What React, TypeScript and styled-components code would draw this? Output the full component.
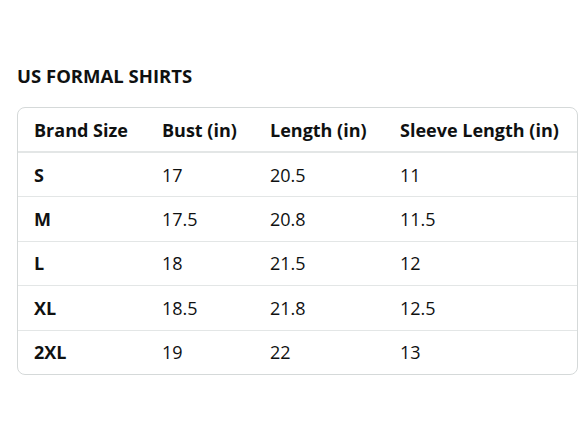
import styled, { createGlobalStyle } from "styled-components";

const GlobalStyle = createGlobalStyle`
  body {
    margin: 0;
    background: #ffffff;
    font-family: "Open Sans", "Noto Sans", Arial, sans-serif;
    color: #0f1111;
  }
`;

const rows = [
  ["S", "17", "20.5", "11"],
  ["M", "17.5", "20.8", "11.5"],
  ["L", "18", "21.5", "12"],
  ["XL", "18.5", "21.8", "12.5"],
  ["2XL", "19", "22", "13"],
];

const heads = ["Brand Size", "Bust (in)", "Length (in)", "Sleeve Length (in)"];
const widths = [128, 108, 130, 195];

function App() {
  return (
    <Page>
      <GlobalStyle />
      <Title>US FORMAL SHIRTS</Title>
      <TableBox>
        <Table>
          <colgroup>
            {widths.map((w, i) => (
              <col key={i} style={{ width: w }} />
            ))}
          </colgroup>
          <thead>
            <tr>
              {heads.map((h) => (
                <HeadCell key={h}>{h}</HeadCell>
              ))}
            </tr>
          </thead>
          <tbody>
            {rows.map((r, i) => (
              <Row key={r[0]} last={i === rows.length - 1}>
                {r.map((v, j) => (
                  <Cell key={j} bold={j === 0}>
                    {v}
                  </Cell>
                ))}
              </Row>
            ))}
          </tbody>
        </Table>
      </TableBox>
    </Page>
  );
}

const Page = styled.div`
  padding: 64px 10px 0 17px;
`;
const Title = styled.h2`
  margin: 0 0 19px 0;
  font-size: 18.5px;
  font-weight: 700;
  line-height: 24px;
`;
const TableBox = styled.div`
  width: 559px;
  border: 1px solid #d5d9d9;
  border-radius: 8px;
  overflow: hidden;
`;
const Table = styled.table`
  width: 100%;
  border-collapse: collapse;
  table-layout: fixed;
`;
const HeadCell = styled.th`
  height: 43px;
  padding: 0 0 0 16px;
  text-align: left;
  font-size: 18px;
  font-weight: 700;
  border-bottom: 2px solid #e3e6e6;
  white-space: nowrap;
`;
const Row = styled.tr<{ last?: boolean }>`
  & > td {
    border-bottom: ${(p) => (p.last ? "none" : "1px solid #e3e6e6")};
  }
`;
const Cell = styled.td<{ bold?: boolean }>`
  height: 43.4px;
  padding: 0 0 0 16px;
  font-size: 18px;
  font-weight: ${(p) => (p.bold ? 700 : 400)};
  white-space: nowrap;
`;

export default App;
